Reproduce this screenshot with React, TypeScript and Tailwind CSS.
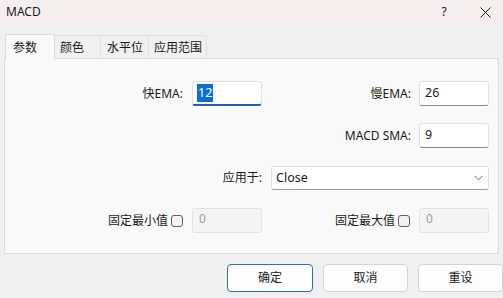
import React from "react";

const font = {
  fontFamily: '"Segoe UI", "Noto Sans", "Noto Sans CJK SC", sans-serif',
};

function TextBox({
  value,
  focused,
  disabled,
}: {
  value: string;
  focused?: boolean;
  disabled?: boolean;
}) {
  if (disabled) {
    return (
      <div className="w-[70px] h-[25px] rounded-[3px] border border-[#e3e3e3] bg-[#f5f5f5] px-[6px] text-[12px] leading-[20px] text-[#9d9d9d]">
        {value}
      </div>
    );
  }
  return (
    <div
      className={`w-[70px] h-[25px] rounded-[3px] border border-[#e1e1e1] bg-white px-[4px] flex items-center text-[12.5px] text-[#1a1a1a] ${
        focused ? "border-b-2 border-b-[#1f63a8]" : "border-b-[#8a8a8a]"
      }`}
    >
      {focused ? (
        <span className="bg-[#0a6fd2] text-white leading-[18px] px-[1px]">{value}</span>
      ) : (
        <span className="pl-[1px]">{value}</span>
      )}
    </div>
  );
}

function Check() {
  return <span className="inline-block w-[12px] h-[12px] rounded-[3px] border border-[#5e5e5e] bg-[#f2f2f2]" />;
}

function Btn({ label, primary }: { label: string; primary?: boolean }) {
  return (
    <button
      className={`h-[28px] rounded-[4px] border bg-[#fdfdfd] text-[12px] text-[#1a1a1a] ${
        primary ? "w-[86px] border-[#2f6fb0]" : "w-[85px] border-[#d4d4d4]"
      }`}
    >
      {label}
    </button>
  );
}

export default function App() {
  return (
    <div className="w-[503px] h-[298px] bg-[#f0f0f0] text-[#1a1a1a] overflow-hidden" style={font}>
      {/* title bar */}
      <div className="h-[24px] bg-[#f4eeee] flex items-center pl-[6px] text-[12px]">
        <span className="flex-1">MACD</span>
        <span className="w-[20px] text-center mr-[26px]">?</span>
        <svg width="11" height="11" viewBox="0 0 11 11" className="mr-[12px]">
          <path d="M0.5 0.5 L10.5 10.5 M10.5 0.5 L0.5 10.5" stroke="#1a1a1a" strokeWidth="1" />
        </svg>
      </div>

      {/* tabs */}
      <div className="pt-[10px] pl-[5px] flex items-end h-[34px] text-[12px]">
        <div className="w-[50px] h-[25px] bg-[#f9f9f9] border border-[#dadada] border-b-0 rounded-t-[2px] pl-[7px] pt-[4px] relative z-10 -mb-px">
          参数
        </div>
        <div className="w-[46px] h-[23px] border border-[#e2e2e2] border-b-0 border-l-0 pl-[5px] pt-[3px]">颜色</div>
        <div className="w-[48px] h-[23px] border border-[#e2e2e2] border-b-0 border-l-0 pl-[6px] pt-[3px]">水平位</div>
        <div className="w-[58px] h-[23px] border border-[#e2e2e2] border-b-0 border-l-0 pl-[5px] pt-[3px]">应用范围</div>
      </div>

      {/* panel */}
      <div className="ml-[4px] w-[495px] h-[196px] bg-[#f9f9f9] border border-[#dcdcdc] text-[12px]">
        <div className="pt-[22px] flex items-center h-[47px]">
          <span className="w-[178px] text-right">快EMA:</span>
          <div className="ml-[9px]">
            <TextBox value="12" focused />
          </div>
          <span className="w-[149px] text-right">慢EMA:</span>
          <div className="ml-[8px]">
            <TextBox value="26" />
          </div>
        </div>

        <div className="mt-[17px] flex items-center h-[25px]">
          <span className="w-[406px] text-right">MACD SMA:</span>
          <div className="ml-[8px]">
            <TextBox value="9" />
          </div>
        </div>

        <div className="mt-[18px] flex items-center h-[24px]">
          <span className="w-[257px] text-right">应用于:</span>
          <div className="ml-[9px] w-[218px] h-[24px] rounded-[3px] border border-[#dedede] border-b-[#a0a0a0] bg-white flex items-center pl-[4px] pr-[5px] text-[12.5px]">
            <span className="flex-1">Close</span>
            <svg width="9" height="6" viewBox="0 0 9 6">
              <path d="M0.5 0.8 L4.5 4.8 L8.5 0.8" fill="none" stroke="#6a6a6a" strokeWidth="1" />
            </svg>
          </div>
        </div>

        <div className="mt-[18px] flex items-center h-[25px]">
          <div className="w-[178px] flex items-center justify-end gap-[3px]">
            <span>固定最小值</span>
            <Check />
          </div>
          <div className="ml-[9px]">
            <TextBox value="0" disabled />
          </div>
          <div className="w-[149px] flex items-center justify-end gap-[3px] pr-[1px]">
            <span>固定最大值</span>
            <Check />
          </div>
          <div className="ml-[8px]">
            <TextBox value="0" disabled />
          </div>
        </div>
      </div>

      {/* buttons */}
      <div className="mt-[10px] flex pl-[227px] gap-[10px]">
        <Btn label="确定" primary />
        <Btn label="取消" />
        <Btn label="重设" />
      </div>
    </div>
  );
}
